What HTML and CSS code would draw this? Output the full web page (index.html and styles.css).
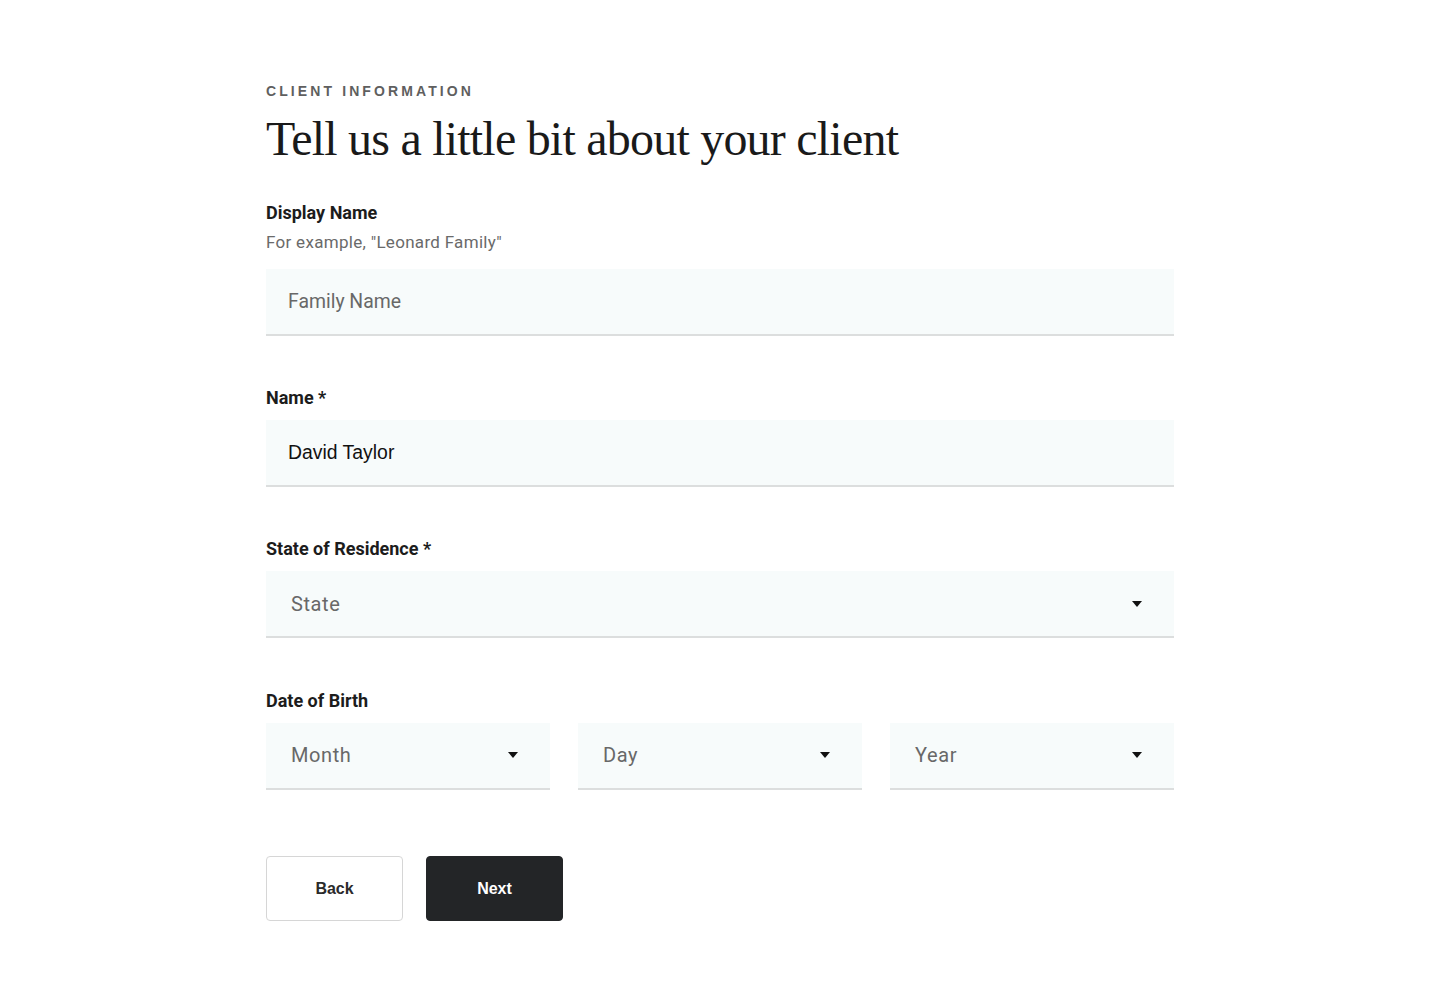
FILE: index.html
```html
<!DOCTYPE html>
<html lang="en">
<head>
<meta charset="utf-8">
<title>Client Information</title>
<link rel="stylesheet" href="styles.css">
</head>
<body>
<main class="page">
  <p class="eyebrow">CLIENT INFORMATION</p>
  <h1 class="title">Tell us a little bit about your client</h1>

  <div class="field field-first">
    <label class="label">Display Name</label>
    <p class="hint">For example, "Leonard Family"</p>
    <div class="input"><span class="placeholder">Family Name</span></div>
  </div>

  <div class="field">
    <label class="label">Name *</label>
    <div class="input"><span class="value">David Taylor</span></div>
  </div>

  <div class="field">
    <label class="label">State of Residence *</label>
    <div class="input select"><span class="placeholder sel">State</span><span class="caret"></span></div>
  </div>

  <div class="field">
    <label class="label">Date of Birth</label>
    <div class="dob">
      <div class="input select"><span class="placeholder sel">Month</span><span class="caret"></span></div>
      <div class="input select"><span class="placeholder sel">Day</span><span class="caret"></span></div>
      <div class="input select"><span class="placeholder sel">Year</span><span class="caret"></span></div>
    </div>
  </div>

  <div class="actions">
    <button class="btn btn-back">Back</button>
    <button class="btn btn-next">Next</button>
  </div>
</main>
</body>
</html>
```

FILE: styles.css
```css
* { box-sizing: border-box; }
body {
  margin: 0;
  background: #fff;
  font-family: Roboto, "Liberation Sans", sans-serif;
  color: #1c1c1c;
}
.page {
  width: 908px;
  margin: 0 auto;
  padding-top: 83px;
}
.eyebrow {
  margin: 0;
  font-family: "Liberation Sans", Arial, sans-serif;
  font-weight: 700;
  font-size: 14px;
  line-height: 16px;
  letter-spacing: 3.1px;
  color: #5f5f5f;
}
.title {
  margin: 12px 0 0;
  font-family: "Liberation Serif", "Times New Roman", serif;
  font-weight: 400;
  font-size: 48px;
  line-height: 56px;
  letter-spacing: -0.78px;
  color: #1a1a1a;
}
.field { margin-top: 52.2px; }
.field-first { margin-top: 36px; }
.label {
  display: block;
  font-family: Roboto, sans-serif;
  font-weight: 700;
  font-size: 18px;
  line-height: 20px;
  color: #1c1c1c;
}
.hint {
  margin: 9px 0 0;
  font-size: 17px;
  line-height: 20px;
  letter-spacing: 0.3px;
  color: #6a6a6a;
}
.field-first .input { margin-top: 17px; }
.input {
  margin-top: 12px;
  height: 67px;
  background: #f7fbfb;
  border-bottom: 2px solid #dcdede;
  display: flex;
  align-items: center;
  padding: 0 22px;
}
.placeholder {
  font-size: 19.4px;
  color: #686868;
}
.value {
  font-family: "Liberation Sans", Arial, sans-serif;
  font-size: 19.4px;
  color: #111;
}
.select {
  justify-content: space-between;
  padding: 0 32px 0 25px;
}
.sel {
  font-size: 20px;
  letter-spacing: 0.6px;
}
.caret {
  width: 0;
  height: 0;
  border-left: 5.5px solid transparent;
  border-right: 5.5px solid transparent;
  border-top: 6px solid #111;
}
.dob {
  display: grid;
  grid-template-columns: repeat(3, 1fr);
  column-gap: 28px;
}
.dob .input { margin-top: 12px; }
.actions {
  margin-top: 66.5px;
  display: flex;
  gap: 23px;
}
.btn {
  width: 137px;
  height: 65px;
  border-radius: 4px;
  font-family: "Liberation Sans", Arial, sans-serif;
  font-weight: 700;
  font-size: 16px;
  cursor: pointer;
}
.btn-back {
  background: #fff;
  border: 1px solid #d6d6d6;
  color: #2b2b2b;
}
.btn-next {
  background: #232527;
  border: 1px solid #232527;
  color: #fff;
}
```
